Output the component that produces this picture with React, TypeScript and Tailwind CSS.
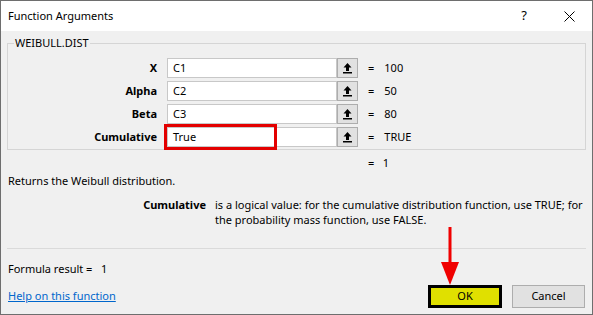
const font = { fontFamily: '"Noto Sans", "Liberation Sans", sans-serif' };

function RefButton() {
  return (
    <div className="w-[21px] h-full bg-[#e1e1e1] border border-[#adadad] flex items-center justify-center">
      <svg width="11" height="12" viewBox="0 0 11 12">
        <path d="M5.5 1 L1.5 5.5 H4 V9 H7 V5.5 H9.5 Z" fill="#000" />
        <rect x="1" y="10" width="9" height="1.5" fill="#000" />
      </svg>
    </div>
  );
}

const args = [
  { label: "X", ref: "C1", value: "100" },
  { label: "Alpha", ref: "C2", value: "50" },
  { label: "Beta", ref: "C3", value: "80" },
  { label: "Cumulative", ref: "True", value: "TRUE", marked: true },
];

export default function App() {
  return (
    <div
      className="relative w-[593px] h-[315px] bg-[#f0f0f0] border border-[#6e6e6e] text-[11px] text-black overflow-hidden"
      style={font}
    >
      {/* title bar */}
      <div className="h-[30px] bg-white flex items-center pl-[7px]">
        <span className="text-[11px]">Function Arguments</span>
        <span className="ml-auto text-[13px]">?</span>
        <svg width="11" height="11" viewBox="0 0 11 11" className="ml-[37px] mr-[17px]">
          <path d="M0.5 0.5 L10.5 10.5 M10.5 0.5 L0.5 10.5" stroke="#000" strokeWidth="1" />
        </svg>
      </div>

      <div className="px-[6px] pt-[6px]">
        <fieldset className="border border-[#d5d5d5] px-[6px] pb-[2px]">
          <legend className="px-[1px] leading-[12px]">WEIBULL.DIST</legend>
          <div className="pt-[9px] flex flex-col gap-[3px]">
            {args.map((a) => (
              <div key={a.label} className="flex items-center h-[20px]">
                <div className="w-[143px] text-right font-bold">{a.label}</div>
                <div className="relative ml-[10px] w-[170px] h-full bg-white border border-[#c8c8c8] flex items-center pl-[5px]">
                  {a.ref}
                  {a.marked && (
                    <div className="absolute left-[-4px] top-[-4px] w-[113px] h-[26px] border-[3px] border-[#e30000]" />
                  )}
                </div>
                <RefButton />
                <span className="ml-[10px]">=</span>
                <span className="ml-[10px]">{a.value}</span>
              </div>
            ))}
          </div>
        </fieldset>

        <div className="mt-[5px] h-[16px] leading-[16px] ml-[361px]">
          =&nbsp;&nbsp;&nbsp;1
        </div>
        <div className="mt-[2px] h-[16px] leading-[16px] pl-[1px]">
          Returns the Weibull distribution.
        </div>
        <div className="mt-[8px] flex leading-[15px]">
          <div className="w-[199px] text-right font-bold shrink-0">Cumulative</div>
          <div className="ml-[9px] whitespace-nowrap">
            is a logical value: for the cumulative distribution function, use TRUE; for
            <br />
            the probability mass function, use FALSE.
          </div>
        </div>

        <div className="mt-[21px] border-t border-[#dadada]" />

        <div className="mt-[12px] h-[16px] leading-[16px] pl-[1px]">
          Formula result =&nbsp;&nbsp;&nbsp;1
        </div>

        <div className="mt-[8px] flex items-center h-[23px]">
          <a href="#" className="pl-[1px] text-[#0066cc] underline">
            Help on this function
          </a>
          <button className="ml-auto w-[74px] h-[23px] bg-[#e0e000] border-[3px] border-black flex items-center justify-center">
            OK
          </button>
          <button className="ml-[10px] mr-[1px] w-[73px] h-[23px] bg-[#e1e1e1] border border-[#adadad] flex items-center justify-center">
            Cancel
          </button>
        </div>
      </div>

      {/* red annotation arrow */}
      <svg
        className="absolute left-[439px] top-[226px]"
        width="20"
        height="59"
        viewBox="0 0 20 59"
      >
        <rect x="8.5" y="0" width="3" height="38" fill="#f00000" />
        <path d="M1 35 L19 35 L10 58 Z" fill="#f00000" />
      </svg>
    </div>
  );
}
